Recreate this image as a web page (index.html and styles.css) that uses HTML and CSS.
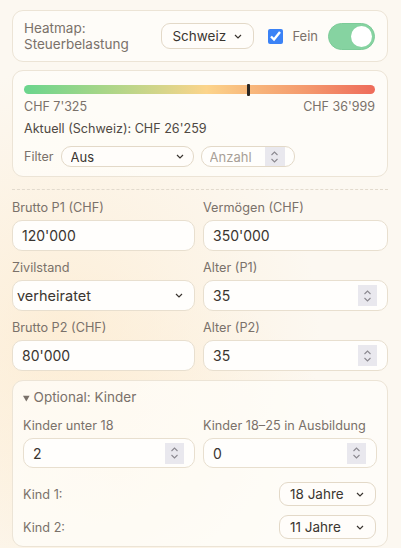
FILE: index.html
```html
<!DOCTYPE html>
<html lang="de">
<head>
<meta charset="utf-8">
<title>Heatmap</title>
<link rel="stylesheet" href="styles.css">
</head>
<body>
<div class="page">
  <div class="card head">
    <div class="title">Heatmap:<br>Steuerbelastung</div>
    <select class="sel sel-region"><option>Schweiz</option></select>
    <label class="check"><input type="checkbox" checked> <span>Fein</span></label>
    <span class="toggle"><span class="knob"></span></span>
  </div>

  <div class="card legend">
    <div class="bar"><span class="marker" style="left:63.5%"></span></div>
    <div class="range"><span>CHF 7'325</span><span>CHF 36'999</span></div>
    <div class="current">Aktuell (Schweiz): CHF 26'259</div>
    <div class="filter">
      <span class="flabel">Filter</span>
      <select class="sel sel-filter"><option>Aus</option></select>
      <div class="numbox numbox-small">
        <input type="text" placeholder="Anzahl">
        <span class="spin"><svg width="9" height="14" viewBox="0 0 9 14"><path d="M1.5 5 L4.5 2 L7.5 5 M1.5 9 L4.5 12 L7.5 9" fill="none" stroke="#8b8990" stroke-width="1.1"/></svg></span>
      </div>
    </div>
  </div>

  <hr class="sep">

  <div class="grid">
    <div class="field"><label>Brutto P1 (CHF)</label><input class="txt" type="text" value="120'000"></div>
    <div class="field"><label>Vermögen (CHF)</label><input class="txt" type="text" value="350'000"></div>
    <div class="field"><label>Zivilstand</label><select class="sel sel-big"><option>verheiratet</option></select></div>
    <div class="field"><label>Alter (P1)</label>
      <div class="numbox"><input type="text" value="35"><span class="spin"><svg width="9" height="14" viewBox="0 0 9 14"><path d="M1.5 5 L4.5 2 L7.5 5 M1.5 9 L4.5 12 L7.5 9" fill="none" stroke="#8b8990" stroke-width="1.1"/></svg></span></div>
    </div>
    <div class="field"><label>Brutto P2 (CHF)</label><input class="txt" type="text" value="80'000"></div>
    <div class="field"><label>Alter (P2)</label>
      <div class="numbox"><input type="text" value="35"><span class="spin"><svg width="9" height="14" viewBox="0 0 9 14"><path d="M1.5 5 L4.5 2 L7.5 5 M1.5 9 L4.5 12 L7.5 9" fill="none" stroke="#8b8990" stroke-width="1.1"/></svg></span></div>
    </div>
  </div>

  <details class="card kids" open>
    <summary>Optional: Kinder</summary>
    <div class="grid inner">
      <div class="field"><label>Kinder unter 18</label>
        <div class="numbox"><input type="text" value="2"><span class="spin"><svg width="9" height="14" viewBox="0 0 9 14"><path d="M1.5 5 L4.5 2 L7.5 5 M1.5 9 L4.5 12 L7.5 9" fill="none" stroke="#8b8990" stroke-width="1.1"/></svg></span></div>
      </div>
      <div class="field"><label>Kinder 18–25 in Ausbildung</label>
        <div class="numbox"><input type="text" value="0"><span class="spin"><svg width="9" height="14" viewBox="0 0 9 14"><path d="M1.5 5 L4.5 2 L7.5 5 M1.5 9 L4.5 12 L7.5 9" fill="none" stroke="#8b8990" stroke-width="1.1"/></svg></span></div>
      </div>
    </div>
    <div class="kid"><span>Kind 1:</span><select class="sel sel-kid"><option>18 Jahre</option></select></div>
    <div class="kid"><span>Kind 2:</span><select class="sel sel-kid"><option>11 Jahre</option></select></div>
  </details>
</div>
</body>
</html>
```

FILE: styles.css
```css
html, body {
  margin: 0;
  padding: 0;
}
body {
  font-family: Inter, "Noto Sans", sans-serif;
  color: #3a3530;
  background: #fcf8f1;
  background-image:
    radial-gradient(ellipse 260px 260px at 60px 330px, rgba(253, 234, 205, 0.7), rgba(253, 234, 205, 0) 100%),
    radial-gradient(ellipse 220px 200px at 120px 470px, rgba(252, 238, 215, 0.6), rgba(252, 238, 215, 0) 100%);
  width: 401px;
  height: 548px;
  overflow: hidden;
}
.page {
  padding: 10px 13px 0 12px;
  display: flex;
  flex-direction: column;
}
.card {
  background: rgba(255, 253, 249, 0.75);
  border: 1px solid #ece4d6;
  border-radius: 11px;
  box-sizing: border-box;
}
.head {
  height: 52px;
  display: flex;
  align-items: center;
  padding: 0 12px 0 11px;
}
.title {
  font-size: 13.5px;
  line-height: 16px;
  color: #7a716a;
  flex: 1;
}
.sel {
  -webkit-appearance: none;
  appearance: none;
  font-family: Inter, "Noto Sans", sans-serif;
  background-color: #fffdfa;
  background-image: url("data:image/svg+xml,%3Csvg xmlns='http://www.w3.org/2000/svg' width='8' height='5' viewBox='0 0 8 5'%3E%3Cpath d='M1 1 L4 4 L7 1' fill='none' stroke='%233a3530' stroke-width='1.2'/%3E%3C/svg%3E");
  background-repeat: no-repeat;
  background-position: right 11px center;
  border: 1px solid #e3d9c8;
  border-radius: 9px;
  color: #3a3530;
  box-sizing: border-box;
  margin: 0;
  outline: none;
}
.sel-region {
  width: 93px;
  height: 26px;
  font-size: 13.5px;
  padding: 0 4px 0 10px;
  margin-right: 14px;
}
.check {
  display: flex;
  align-items: center;
  font-size: 13px;
  color: #7a716a;
  margin-right: 10px;
}
.check input {
  width: 15px;
  height: 15px;
  margin: 0 9px 0 0;
  accent-color: #3b82f6;
}
.toggle {
  width: 47px;
  height: 27px;
  border-radius: 14px;
  background: #86d3a1;
  border: 1px solid #7ccb98;
  box-sizing: border-box;
  position: relative;
}
.knob {
  position: absolute;
  right: 2px;
  top: 2px;
  width: 21px;
  height: 21px;
  border-radius: 50%;
  background: #fff;
}
.legend {
  margin-top: 8px;
  padding: 14px 12px 9px 11px;
  display: flex;
  flex-direction: column;
}
.bar {
  position: relative;
  height: 9px;
  border-radius: 5px;
  background: linear-gradient(90deg, #6ad58d 0%, #a6d688 22%, #d8d58a 40%, #fcd48b 52%, #f8b97d 64%, #f49a6e 80%, #ee6b5a 100%);
}
.marker {
  position: absolute;
  top: -1px;
  width: 3px;
  height: 12px;
  background: #2b2622;
  border-radius: 1px;
}
.range {
  display: flex;
  justify-content: space-between;
  font-size: 12.5px;
  line-height: 16px;
  color: #7a716a;
  margin-top: 5px;
}
.current {
  font-size: 12.6px;
  line-height: 16px;
  color: #4f4943;
  margin-top: 6px;
}
.filter {
  display: flex;
  align-items: center;
  margin-top: 9px;
}
.flabel {
  font-size: 12.5px;
  color: #7a716a;
  margin-right: 7px;
}
.sel-filter {
  width: 133px;
  height: 21px;
  font-size: 13px;
  padding: 0 4px 0 9px;
  border-radius: 10px;
  margin-right: 7px;
  background-position: right 9px center;
}
.numbox {
  display: flex;
  align-items: center;
  height: 31px;
  box-sizing: border-box;
  border: 1px solid #e8dfcf;
  border-radius: 10px;
  background: #fffefc;
  padding: 0 10px 0 9px;
}
.numbox input {
  flex: 1;
  min-width: 0;
  border: 0;
  background: transparent;
  font-family: Inter, "Noto Sans", sans-serif;
  font-size: 14px;
  color: #3a3530;
  padding: 0;
  margin: 0;
  outline: none;
}
.spin {
  width: 19px;
  height: 21px;
  background: #e9e8ee;
  display: flex;
  align-items: center;
  justify-content: center;
}
.numbox-small {
  width: 94px;
  height: 21px;
  padding: 0 9px 0 8px;
  border-color: #e3d9c8;
}
.numbox-small input {
  font-size: 13px;
}
.numbox-small input::placeholder {
  color: #a8a097;
}
.numbox-small .spin {
  height: 19px;
  width: 20px;
}
.sep {
  border: 0;
  border-top: 1px dashed #e2dacd;
  margin: 12px 0 10px;
  height: 0;
}
.grid {
  display: grid;
  grid-template-columns: 183px 185px;
  column-gap: 8px;
  row-gap: 9px;
}
.field {
  display: flex;
  flex-direction: column;
}
.field label {
  font-size: 12.7px;
  line-height: 16px;
  color: #7a716a;
  margin-bottom: 4px;
  white-space: nowrap;
}
.txt {
  height: 31px;
  box-sizing: border-box;
  border: 1px solid #e8dfcf;
  border-radius: 10px;
  background: #fffefc;
  font-family: Inter, "Noto Sans", sans-serif;
  font-size: 14px;
  color: #3a3530;
  padding: 0 8px 0 9px;
  margin: 0;
  width: 100%;
  outline: none;
}
.sel-big {
  height: 31px;
  font-size: 14.5px;
  padding: 0 6px 0 4px;
  border-radius: 10px;
  border-color: #e8dfcf;
  background-color: #fffefc;
  width: 100%;
}
.kids {
  margin-top: 9px;
  padding: 8px 11px 7px 10px;
}
.kids summary {
  font-size: 13.5px;
  line-height: 17px;
  color: #7a716a;
  cursor: pointer;
  margin-bottom: 11px;
}
.kids summary::marker {
  font-size: 10px;
}
.inner {
  grid-template-columns: 172px 174px;
}
.inner .numbox {
  height: 30px;
}
.kid {
  display: flex;
  justify-content: space-between;
  align-items: center;
  font-size: 12.7px;
  color: #7a716a;
  margin-top: 9px;
  height: 24px;
}
.inner + .kid {
  margin-top: 14px;
}
.sel-kid {
  width: 97px;
  height: 24px;
  font-size: 13.5px;
  padding: 0 4px 0 10px;
  border-radius: 9px;
}
```
